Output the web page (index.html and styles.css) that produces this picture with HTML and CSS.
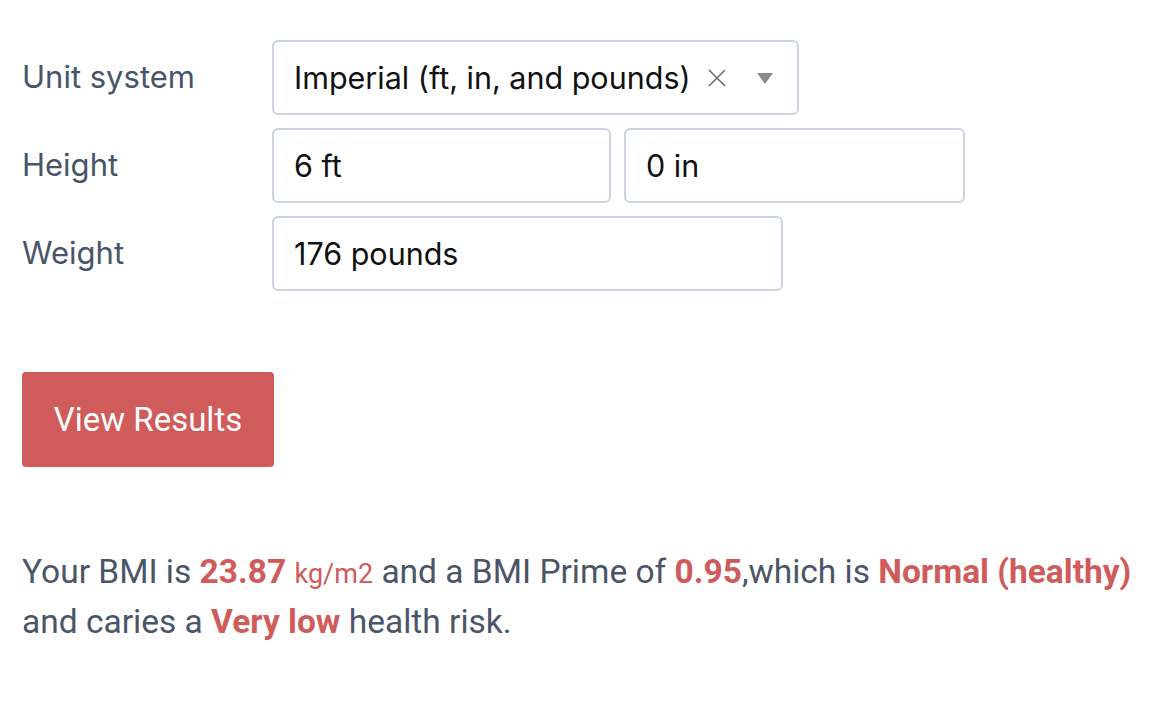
FILE: index.html
```html
<!DOCTYPE html>
<html lang="en">
<head>
<meta charset="utf-8">
<title>BMI Calculator</title>
<link rel="stylesheet" href="styles.css">
</head>
<body>
<main class="calc">
  <div class="form">
    <div class="row">
      <label class="label">Unit system</label>
      <div class="select">
        <span class="select-value">Imperial (ft, in, and pounds)</span>
        <span class="select-clear" aria-hidden="true">
          <svg width="18" height="18" viewBox="0 0 18 18"><path d="M1 1 L17 17 M17 1 L1 17" stroke="#6b6b6b" stroke-width="1.6" fill="none"/></svg>
        </span>
        <span class="select-arrow" aria-hidden="true">
          <svg width="16" height="11" viewBox="0 0 16 11"><path d="M0 0 H16 L8 11 Z" fill="#8a8a8a"/></svg>
        </span>
      </div>
    </div>
    <div class="row">
      <label class="label">Height</label>
      <div class="pair">
        <div class="input w-ft">6 ft</div>
        <div class="input w-in">0 in</div>
      </div>
    </div>
    <div class="row">
      <label class="label">Weight</label>
      <div class="input w-weight">176 pounds</div>
    </div>
  </div>
  <button class="btn" type="button">View Results</button>
  <p class="result">Your BMI is <strong>23.87</strong> <span class="unit">kg/m2</span> and a BMI Prime of <strong>0.95</strong>,which is <strong>Normal (healthy)</strong> and caries a <strong>Very low</strong> health risk.</p>
</main>
</body>
</html>
```
FILE: styles.css
```css
* { box-sizing: border-box; }
html, body { margin: 0; padding: 0; background: #fff; }
body { font-family: Inter, "Noto Sans", Roboto, sans-serif; }
.calc { padding: 40px 22px 0 22px; }
.form { display: flex; flex-direction: column; gap: 13px; }
.row { display: flex; align-items: center; }
.label { width: 250px; flex: none; font-size: 31px; color: #475569; line-height: 1; padding-bottom: 2px; }
.select, .input {
  height: 75px;
  border: 2px solid #cbd5e0;
  border-radius: 6px;
  display: flex;
  align-items: center;
  padding: 0 20px;
  font-size: 30.5px;
  color: #111;
  background: #fff;
}
.select { width: 527px; padding-right: 24px; }
.select-value { flex: 1; white-space: nowrap; }
.select-clear { display: flex; margin-right: 31px; }
.select-arrow { display: flex; margin-top: 2px; }
.pair { display: flex; gap: 13px; }
.w-ft { width: 339px; }
.w-in { width: 341px; }
.w-weight { width: 511px; }
.btn {
  margin-top: 81px;
  width: 252px;
  height: 95px;
  border: 0;
  border-radius: 4px;
  background: #d05b5b;
  color: #fff;
  font-family: Roboto, Inter, sans-serif;
  font-size: 33px;
  padding: 0;
  display: block;
}
.result {
  margin: 81px 0 0 0;
  font-family: Roboto, Inter, sans-serif;
  font-size: 33.5px;
  line-height: 47px;
  color: #4a5568;
}
.result strong { color: #d05b5b; font-weight: 700; }
.result .unit { color: #d05b5b; font-size: 27px; }
```
